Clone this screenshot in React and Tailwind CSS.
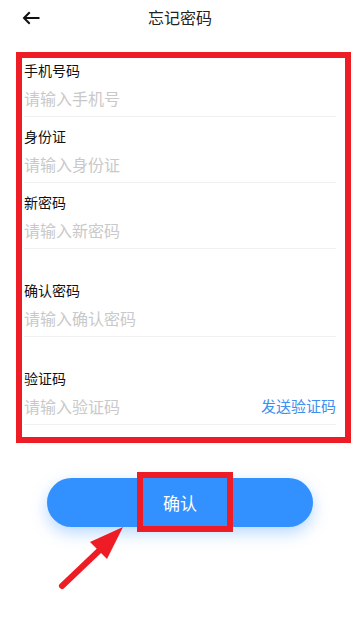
import React from "react";

const font = { fontFamily: '"Noto Sans CJK SC", "Noto Sans", sans-serif' };

function Field({ label, placeholder, top, extra }) {
  return (
    <div className={`flex flex-col border-b border-[#f0f0f0] pb-[6px] ${top}`}>
      <div className="h-[20px] text-[14px] leading-[20px] text-[#111111]">{label}</div>
      <div className="mt-[6px] flex h-[24px] items-center justify-between">
        <input
          className="h-[24px] min-w-0 flex-1 bg-transparent text-[16px] leading-[24px] text-[#333] outline-none placeholder:text-[#c9c9c9]"
          style={font}
          placeholder={placeholder}
        />
        {extra}
      </div>
    </div>
  );
}

export default function App() {
  return (
    <div className="relative min-h-[619px] w-[360px] bg-white" style={font}>
      <div className="relative flex h-[34px] items-center justify-center">
        <button className="absolute left-[22px] top-[11px] flex h-[14px] w-[18px] items-center">
          <svg width="18" height="14" viewBox="0 0 18 14" fill="none">
            <path d="M16.5 7H2.5M7 2L2 7l5 5" stroke="#111" strokeWidth="2" strokeLinecap="square" strokeLinejoin="miter" />
          </svg>
        </button>
        <div className="text-[16px] leading-[22px] text-[#222]">忘记密码</div>
      </div>

      <div className="mx-[16px] mt-[18px] w-[335px] border-[6px] border-[#ee1c25] pb-[12px] pl-[2px] pr-[9px] pt-[2px]">
        <Field label="手机号码" placeholder="请输入手机号" top="pt-0" />
        <Field label="身份证" placeholder="请输入身份证" top="pt-[9px]" />
        <Field label="新密码" placeholder="请输入新密码" top="pt-[9px]" />
        <Field label="确认密码" placeholder="请输入确认密码" top="pt-[31px]" />
        <Field
          label="验证码"
          placeholder="请输入验证码"
          top="pt-[31px]"
          extra={<span className="text-[15px] leading-[24px] text-[#3d8ff0]">发送验证码</span>}
        />
      </div>

      <div className="relative mx-auto mt-[35px] w-[266px]">
        <button className="flex h-[49px] w-[266px] items-center justify-center rounded-full bg-[#3391ff] text-[17px] text-white shadow-[0_6px_16px_rgba(51,145,255,0.35)]">
          确认
        </button>
        <div className="pointer-events-none absolute left-[90px] top-[-6px] h-[60px] w-[96px] border-[6px] border-[#ee1c25]" />
      </div>

      <svg className="pointer-events-none absolute left-0 top-0" width="360" height="619" viewBox="0 0 360 619">
        <line x1="62" y1="586" x2="104" y2="546" stroke="#ee1c25" strokeWidth="6" strokeLinecap="round" />
        <polygon points="123,527 90,542 107,559" fill="#ee1c25" />
      </svg>
    </div>
  );
}
